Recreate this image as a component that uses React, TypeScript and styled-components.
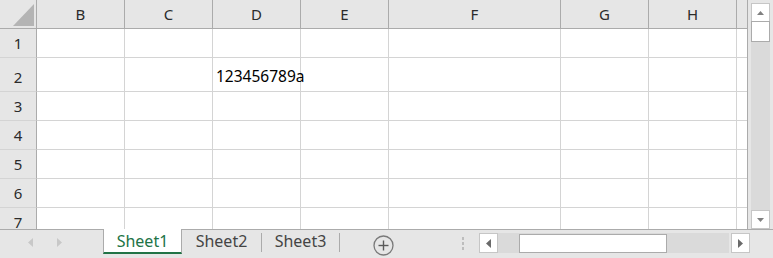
import React from 'react';
import styled, { createGlobalStyle } from 'styled-components';

const GlobalStyle = createGlobalStyle`
  html, body {
    margin: 0;
    padding: 0;
    background: #e6e6e6;
    overflow: hidden;
  }
  body {
    font-family: "Noto Sans", "Liberation Sans", sans-serif;
  }
`;

const palette = {
  header: '#e6e6e6',
  headerLine: '#ababab',
  gridLine: '#d4d4d4',
  track: '#dadada',
  btnBorder: '#c6c6c6',
  arrow: '#808080',
  green: '#217346',
};

const COLUMNS = [
  { name: 'B', width: 88 },
  { name: 'C', width: 88 },
  { name: 'D', width: 88 },
  { name: 'E', width: 88 },
  { name: 'F', width: 172 },
  { name: 'G', width: 88 },
  { name: 'H', width: 88 },
  { name: '', width: 11 },
];

const ROWS = [29, 34, 29, 29, 29, 29, 29];

const Window = styled.div`
  width: 773px;
  height: 258px;
  display: flex;
  flex-direction: column;
  background: ${palette.header};
`;

const Main = styled.div`
  display: flex;
  height: 229px;
`;

const Sheet = styled.div`
  width: 748px;
  height: 229px;
  overflow: hidden;
  display: grid;
  grid-template-columns: 37px ${COLUMNS.map(c => `${c.width}px`).join(' ')};
  grid-template-rows: 29px ${ROWS.map(r => `${r}px`).join(' ')};
  background: #fff;
  box-sizing: border-box;
  border-right: 1px solid ${palette.headerLine};
`;

const Corner = styled.div`
  background: ${palette.header};
  border-right: 1px solid ${palette.headerLine};
  border-bottom: 1px solid ${palette.headerLine};
  box-sizing: border-box;
  display: flex;
  justify-content: flex-end;
  align-items: flex-end;
  padding: 0 2px 2px 0;
`;

const ColHeader = styled.div<{ last?: boolean }>`
  background: ${palette.header};
  border-right: ${p => (p.last ? 'none' : `1px solid ${palette.headerLine}`)};
  border-bottom: 1px solid ${palette.headerLine};
  box-sizing: border-box;
  display: flex;
  align-items: center;
  justify-content: center;
  padding-bottom: 1px;
  font-size: 15px;
  line-height: 20px;
  color: #2b2b2b;
`;

const RowHeader = styled.div`
  background: ${palette.header};
  border-right: 1px solid ${palette.headerLine};
  border-bottom: 1px solid ${palette.gridLine};
  box-sizing: border-box;
  display: flex;
  align-items: flex-end;
  justify-content: center;
  padding-bottom: 4px;
  font-size: 15px;
  line-height: 20px;
  color: #2b2b2b;
`;

const Cell = styled.div<{ last?: boolean }>`
  border-right: ${p => (p.last ? 'none' : `1px solid ${palette.gridLine}`)};
  border-bottom: 1px solid ${palette.gridLine};
  box-sizing: border-box;
  display: flex;
  align-items: flex-end;
  padding: 0 0 5px 3px;
  font-size: 15.5px;
  line-height: 20px;
  color: #000;
  white-space: nowrap;
  overflow: visible;
`;

const VScroll = styled.div`
  width: 25px;
  box-sizing: border-box;
  padding: 3px 3px 0 3px;
  display: flex;
`;

const VTrack = styled.div`
  flex: 1;
  display: flex;
  flex-direction: column;
  background: ${palette.track};
`;

const ScrollButton = styled.div`
  width: 19px;
  height: 19px;
  box-sizing: border-box;
  background: #fff;
  border: 1px solid ${palette.btnBorder};
  display: flex;
  align-items: center;
  justify-content: center;
  flex-shrink: 0;
`;

const VThumb = styled.div`
  height: 21px;
  background: #fff;
  border: 1px solid ${palette.headerLine};
  box-sizing: border-box;
  margin-top: -1px;
`;

const Spacer = styled.div`
  flex: 1;
`;

const Bar = styled.div`
  height: 29px;
  box-sizing: border-box;
  border-top: 1px solid ${palette.headerLine};
  background: ${palette.header};
  display: flex;
  align-items: flex-start;
`;

const NavArea = styled.div`
  width: 103px;
  display: flex;
  gap: 24px;
  padding: 8px 0 0 28px;
  box-sizing: border-box;
`;

const Tab = styled.div<{ active?: boolean; width: number }>`
  width: ${p => p.width}px;
  height: ${p => (p.active ? 25 : 28)}px;
  margin-top: ${p => (p.active ? -1 : 0)}px;
  box-sizing: border-box;
  display: flex;
  justify-content: center;
  padding-top: ${p => (p.active ? 2 : 1)}px;
  font-size: 16px;
  line-height: 21px;
  color: ${p => (p.active ? palette.green : '#444')};
  background: ${p => (p.active ? '#fff' : 'transparent')};
  border-left: ${p => (p.active ? `1px solid ${palette.headerLine}` : 'none')};
  border-right: ${p => (p.active ? `1px solid ${palette.headerLine}` : 'none')};
  border-bottom: ${p => (p.active ? `2px solid ${palette.green}` : 'none')};
`;

const TabSep = styled.div`
  width: 1px;
  height: 19px;
  margin-top: 3px;
  background: ${palette.headerLine};
`;

const AddButton = styled.div`
  margin: 5px 0 0 33px;
  width: 21px;
  height: 21px;
  display: flex;
`;

const Dots = styled.div`
  margin: 7px 0 0 68px;
  display: flex;
  flex-direction: column;
  gap: 2px;
  span {
    width: 2px;
    height: 3px;
    background: #bdbdbd;
  }
`;

const HScroll = styled.div`
  margin: 3px 0 0 15px;
  width: 271px;
  height: 20px;
  display: flex;
`;

const HButton = styled(ScrollButton)`
  height: 20px;
`;

const HTrack = styled.div`
  flex: 1;
  background: ${palette.track};
  padding: 1px 0 0 21px;
  margin-right: 2px;
  display: flex;
`;

const HThumb = styled.div`
  width: 148px;
  height: 19px;
  background: #fff;
  border: 1px solid ${palette.headerLine};
  box-sizing: border-box;
`;

type Dir = 'up' | 'down' | 'left' | 'right';

const Arrow: React.FC<{ dir: Dir; color?: string }> = ({ dir, color = palette.arrow }) => {
  if (dir === 'up' || dir === 'down') {
    const pts = dir === 'up' ? '0,4 7,4 3.5,0' : '0,0 7,0 3.5,4';
    return (
      <svg width="7" height="4" viewBox="0 0 7 4">
        <polygon points={pts} fill={color} />
      </svg>
    );
  }
  const pts = dir === 'left' ? '5,0 5,9 0,4.5' : '0,0 0,9 5,4.5';
  return (
    <svg width="5" height="9" viewBox="0 0 5 9">
      <polygon points={pts} fill={color} />
    </svg>
  );
};

const cellText: Record<string, string> = {
  'D2': '123456789a',
};

const App: React.FC = () => {
  return (
    <Window>
      <GlobalStyle />
      <Main>
        <Sheet>
          <Corner>
            <svg width="21" height="22" viewBox="0 0 21 22">
              <polygon points="0,22 21,22 21,0" fill="#b4b4b4" />
            </svg>
          </Corner>
          {COLUMNS.map((c, i) => (
            <ColHeader key={`h${i}`} last={i === COLUMNS.length - 1}>
              {c.name}
            </ColHeader>
          ))}
          {ROWS.map((_, r) => (
            <React.Fragment key={`r${r}`}>
              <RowHeader>{r + 1}</RowHeader>
              {COLUMNS.map((c, i) => (
                <Cell key={`c${r}-${i}`} last={i === COLUMNS.length - 1}>
                  {cellText[`${c.name}${r + 1}`]}
                </Cell>
              ))}
            </React.Fragment>
          ))}
        </Sheet>
        <VScroll>
          <VTrack>
            <ScrollButton>
              <Arrow dir="up" />
            </ScrollButton>
            <VThumb />
            <Spacer />
            <ScrollButton>
              <Arrow dir="down" />
            </ScrollButton>
          </VTrack>
        </VScroll>
      </Main>
      <Bar>
        <NavArea>
          <Arrow dir="left" color="#c8c8c8" />
          <Arrow dir="right" color="#c8c8c8" />
        </NavArea>
        <Tab active width={79}>Sheet1</Tab>
        <Tab width={79}>Sheet2</Tab>
        <TabSep />
        <Tab width={77}>Sheet3</Tab>
        <TabSep />
        <AddButton>
          <svg width="21" height="21" viewBox="0 0 21 21">
            <circle cx="10.5" cy="10.5" r="9.5" fill="none" stroke="#7a7a7a" strokeWidth="1.3" />
            <line x1="5.5" y1="10.5" x2="15.5" y2="10.5" stroke="#5a5a5a" strokeWidth="1.4" />
            <line x1="10.5" y1="5.5" x2="10.5" y2="15.5" stroke="#5a5a5a" strokeWidth="1.4" />
          </svg>
        </AddButton>
        <Dots>
          <span />
          <span />
          <span />
        </Dots>
        <HScroll>
          <HButton>
            <Arrow dir="left" color="#6a6a6a" />
          </HButton>
          <HTrack>
            <HThumb />
          </HTrack>
          <HButton>
            <Arrow dir="right" color="#6a6a6a" />
          </HButton>
        </HScroll>
      </Bar>
    </Window>
  );
};

export default App;
